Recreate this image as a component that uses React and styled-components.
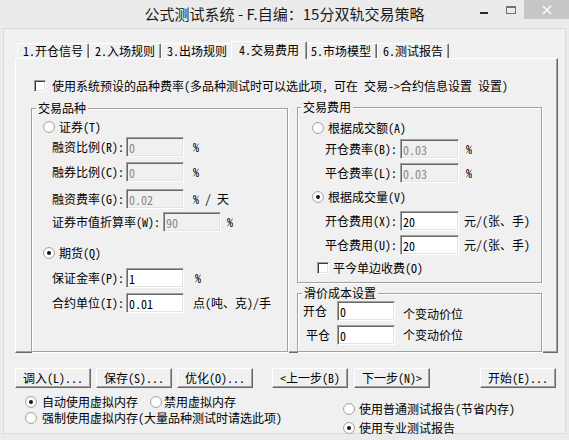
import React from "react"
import styled, { createGlobalStyle } from "styled-components"

const GlobalStyle = createGlobalStyle`
  * { box-sizing: border-box; }
  html, body { margin: 0; padding: 0; background: #ebebeb; }
  body {
    font-family: "Noto Sans Mono CJK SC", "Noto Sans CJK SC", "Liberation Sans", sans-serif;
    font-size: 12px;
    line-height: 14px;
    color: #000;
  }
`

const Window = styled.div`
  width: 569px;
  height: 440px;
  background: #ebebeb;
  display: flex;
  flex-direction: column;
  overflow: hidden;
`

const TitleBar = styled.div`
  height: 28px;
  flex-shrink: 0;
  display: grid;
`

const Title = styled.div`
  grid-area: 1 / 1;
  align-self: center;
  justify-self: center;
  font-family: "Noto Sans CJK SC", sans-serif;
  font-size: 15px;
  line-height: 20px;
  color: #1b1b1b;
`

const Controls = styled.div`
  grid-area: 1 / 1;
  justify-self: end;
  align-self: start;
  display: flex;
`

const CtrlBtn = styled.div`
  width: ${p => p.$w}px;
  height: 19px;
  display: flex;
  align-items: center;
  justify-content: center;
  background: ${p => p.$bg || "transparent"};
`

const MinGlyph = styled.div`
  width: 8px;
  height: 2px;
  background: #2b2b2b;
  margin-top: 6px;
`

const MaxGlyph = styled.div`
  width: 10px;
  height: 8px;
  border: 1px solid #707070;
  border-top-width: 2px;
  margin-top: 1px;
`

const Client = styled.div`
  margin: 0 3px;
  height: 406px;
  background: #f0f0f0;
  border: 1px solid #dadada;
  display: flex;
  flex-direction: column;
`

const TabStrip = styled.div`
  display: flex;
  align-items: flex-end;
  height: 15px;
  margin: 14px 0 0 13px;
`

const Tab = styled.div`
  position: relative;
  z-index: ${p => (p.$active ? 1 : 0)};
  height: ${p => (p.$active ? 18 : 15)}px;
  margin: ${p => (p.$active ? "0 -2px -1px" : "0")};
  padding: ${p => (p.$active ? "0 7px 2px" : "0 5px")};
  display: flex;
  align-items: center;
  white-space: nowrap;
  background: #f0f0f0;
  border-top: 1px solid #fff;
  border-left: 1px solid #fff;
  border-right: 1px solid #696969;
  box-shadow: inset -1px 0 0 #a0a0a0;
  border-radius: 2px 2px 0 0;
`

const Panel = styled.div`
  margin-left: 11px;
  width: 543px;
  height: 295px;
  flex-shrink: 0;
  border: 1px solid;
  border-color: #fff #696969 #696969 #fff;
  box-shadow: inset -1px -1px 0 #a0a0a0;
  padding: 21px 0 0 15px;
  display: flex;
  flex-direction: column;
`

const CheckRow = styled.div`
  display: flex;
  align-items: center;
  gap: ${p => p.$gap ?? 6}px;
  height: ${p => p.$h ?? 12}px;
  margin-top: ${p => p.$mt ?? 0}px;
  padding-left: ${p => p.$pl ?? 3}px;
  white-space: nowrap;
`

const CheckBox = styled.span`
  width: 12px;
  height: 12px;
  flex-shrink: 0;
  background: #fff;
  border: 1px solid;
  border-color: #a0a0a0 #fff #fff #a0a0a0;
  box-shadow: inset 1px 1px 0 #3c3c3c, inset -1px -1px 0 #e3e3e3;
`

const Columns = styled.div`
  display: flex;
  align-items: flex-start;
  margin-top: 16px;
`

const RightColumn = styled.div`
  display: flex;
  flex-direction: column;
  gap: 10px;
  margin: -1px 0 0 9px;
`

const GroupBox = styled.div`
  position: relative;
  width: ${p => p.$w}px;
  height: ${p => p.$h}px;
  border: 1px solid #a0a0a0;
  box-shadow: inset 1px 1px 0 #fff, 1px 1px 0 #fff;
  display: flex;
  flex-direction: column;
`

const Legend = styled.span`
  position: absolute;
  top: -8px;
  left: ${p => p.$left ?? 4}px;
  padding: 0 2px;
  line-height: 14px;
  background: #f0f0f0;
  white-space: nowrap;
`

const Row = styled.div`
  display: flex;
  align-items: center;
  height: 20px;
  margin-top: ${p => p.$mt ?? 0}px;
  padding-left: ${p => p.$pl ?? 0}px;
  white-space: nowrap;
`

const Label = styled.span`
  width: ${p => p.$w}px;
  flex-shrink: 0;
`

const Field = styled.input`
  width: ${p => p.$w ?? 58}px;
  height: 20px;
  flex-shrink: 0;
  margin: 0;
  padding: 0 2px;
  font: inherit;
  font-size: 12px;
  color: ${p => (p.disabled ? "#8a8a8a" : "#000")};
  background: ${p => (p.disabled ? "#f0f0f0" : "#fff")};
  border: 1px solid;
  border-color: #a0a0a0 #fff #fff #a0a0a0;
  box-shadow: inset 1px 1px 0 #696969, inset -1px -1px 0 #e3e3e3;
  outline: none;
`

const Unit = styled.span`
  margin-left: ${p => p.$ml ?? 8}px;
  margin-top: ${p => p.$mt ?? 0}px;
`

const RadioOption = styled.span`
  display: inline-flex;
  align-items: center;
  gap: ${p => p.$gap ?? 4}px;
  margin-left: ${p => p.$ml ?? 0}px;
  white-space: nowrap;
`

const RadioCircle = styled.span`
  width: 12px;
  height: 12px;
  flex-shrink: 0;
  border-radius: 50%;
  border: 1px solid #a8a8a8;
  background: radial-gradient(circle at 50% 50%, #fff 50%, #e4e4e4 100%);
  display: inline-flex;
  align-items: center;
  justify-content: center;

  &::after {
    content: "";
    display: ${p => (p.$checked ? "block" : "none")};
    width: 4px;
    height: 4px;
    border-radius: 50%;
    background: #151515;
  }
`

const ButtonRow = styled.div`
  display: flex;
  margin: 15px 0 0 11px;
`

const Button = styled.div`
  width: 76px;
  height: 20px;
  margin-left: ${p => p.$ml ?? 0}px;
  display: flex;
  align-items: center;
  justify-content: center;
  white-space: nowrap;
  background: #f0f0f0;
  border: 1px solid;
  border-color: #fff #696969 #696969 #fff;
  box-shadow: inset -1px -1px 0 #a0a0a0;
`

const OptionsArea = styled.div`
  display: flex;
`

const OptionsLeft = styled.div`
  width: 339px;
  padding: 6px 0 0 21px;
  display: flex;
  flex-direction: column;
`

const OptionsRight = styled.div`
  padding-top: 13px;
  display: flex;
  flex-direction: column;
  gap: 3px;
`

const OptLine = styled.div`
  display: flex;
  align-items: center;
  height: 16px;
`

const Radio = ({ checked, children, gap, ml }) => (
  <RadioOption $gap={gap} $ml={ml}>
    <RadioCircle $checked={checked} />
    <span>{children}</span>
  </RadioOption>
)

const tabs = ["1.开仓信号", "2.入场规则", "3.出场规则", "4.交易费用", "5.市场模型", "6.测试报告"]

const buttons = [
  { text: "调入(L)...", ml: 0 },
  { text: "保存(S)...", ml: 5 },
  { text: "优化(O)...", ml: 5 },
  { text: "<上一步(B)", ml: 19 },
  { text: "下一步(N)>", ml: 6 },
  { text: "开始(E)...", ml: 50 },
]

export default function App() {
  return (
    <>
      <GlobalStyle />
      <Window>
        <TitleBar>
          <Title>公式测试系统 - F.自编：15分双轨交易策略</Title>
          <Controls>
            <CtrlBtn $w={26}><MinGlyph /></CtrlBtn>
            <CtrlBtn $w={27}><MaxGlyph /></CtrlBtn>
            <CtrlBtn $w={45} $bg="#c7c7c7">
              <svg width="10" height="10" viewBox="0 0 10 10">
                <path d="M1 1 L9 9 M9 1 L1 9" stroke="#fff" strokeWidth="1.4" fill="none" />
              </svg>
            </CtrlBtn>
          </Controls>
        </TitleBar>

        <Client>
          <TabStrip>
            {tabs.map(t => (
              <Tab key={t} $active={t.startsWith("4")}>{t}</Tab>
            ))}
          </TabStrip>

          <Panel>
            <CheckRow>
              <CheckBox />
              <span>使用系统预设的品种费率(多品种测试时可以选此项, 可在 交易-&gt;合约信息设置 设置)</span>
            </CheckRow>

            <Columns>
              <GroupBox $w={257} $h={244}>
                <Legend>交易品种</Legend>
                <Row $mt={8} $pl={11}><Radio>证券(T)</Radio></Row>
                <Row $pl={20}>
                  <Label $w={74}>融资比例(R):</Label>
                  <Field disabled defaultValue="0" />
                  <Unit $ml={9}>%</Unit>
                </Row>
                <Row $mt={5} $pl={20}>
                  <Label $w={74}>融券比例(C):</Label>
                  <Field disabled defaultValue="0" />
                  <Unit $ml={9}>%</Unit>
                </Row>
                <Row $mt={7} $pl={20}>
                  <Label $w={74}>融资费率(G):</Label>
                  <Field disabled defaultValue="0.02" />
                  <Unit $ml={9}>% / 天</Unit>
                </Row>
                <Row $mt={3} $pl={20}>
                  <Label $w={111}>证券市值折算率(W):</Label>
                  <Field disabled defaultValue="90" />
                  <Unit $ml={6}>%</Unit>
                </Row>
                <Row $mt={11} $pl={11}><Radio checked>期货(Q)</Radio></Row>
                <Row $mt={5} $pl={20}>
                  <Label $w={74}>保证金率(P):</Label>
                  <Field defaultValue="1" />
                  <Unit $ml={11}>%</Unit>
                </Row>
                <Row $mt={5} $pl={20}>
                  <Label $w={74}>合约单位(I):</Label>
                  <Field defaultValue="0.01" />
                  <Unit $ml={9}>点(吨、克)/手</Unit>
                </Row>
              </GroupBox>

              <RightColumn>
                <GroupBox $w={245} $h={176}>
                  <Legend $left={3}>交易费用</Legend>
                  <Row $mt={10} $pl={14}><Radio>根据成交额(A)</Radio></Row>
                  <Row $mt={1} $pl={27}>
                    <Label $w={75}>开仓费率(B):</Label>
                    <Field $w={59} disabled defaultValue="0.03" />
                    <Unit $ml={7}>%</Unit>
                  </Row>
                  <Row $mt={4} $pl={27}>
                    <Label $w={75}>平仓费率(L):</Label>
                    <Field $w={59} disabled defaultValue="0.03" />
                    <Unit $ml={7}>%</Unit>
                  </Row>
                  <Row $mt={4} $pl={14}><Radio checked>根据成交量(V)</Radio></Row>
                  <Row $mt={4} $pl={27}>
                    <Label $w={75}>开仓费用(X):</Label>
                    <Field $w={59} defaultValue="20" />
                    <Unit $ml={5}>元/(张、手)</Unit>
                  </Row>
                  <Row $mt={4} $pl={27}>
                    <Label $w={75}>平仓费用(U):</Label>
                    <Field $w={59} defaultValue="20" />
                    <Unit $ml={5}>元/(张、手)</Unit>
                  </Row>
                  <CheckRow $h={20} $mt={3} $pl={19} $gap={4}>
                    <CheckBox />
                    <span>平今单边收费(O)</span>
                  </CheckRow>
                </GroupBox>

                <GroupBox $w={245} $h={59}>
                  <Legend>滑价成本设置</Legend>
                  <Row $mt={7} $pl={5}>
                    <Label $w={34}>开仓</Label>
                    <Field defaultValue="0" />
                    <Unit $ml={8} $mt={6}>个变动价位</Unit>
                  </Row>
                  <Row $mt={4} $pl={8}>
                    <Label $w={31}>平仓</Label>
                    <Field defaultValue="0" />
                    <Unit $ml={8}>个变动价位</Unit>
                  </Row>
                </GroupBox>
              </RightColumn>
            </Columns>
          </Panel>

          <ButtonRow>
            {buttons.map(b => (
              <Button key={b.text} $ml={b.ml}>{b.text}</Button>
            ))}
          </ButtonRow>

          <OptionsArea>
            <OptionsLeft>
              <OptLine>
                <Radio checked gap={5}>自动使用虚拟内存</Radio>
                <Radio gap={2} ml={12}>禁用虚拟内存</Radio>
              </OptLine>
              <OptLine>
                <Radio gap={5}>强制使用虚拟内存(大量品种测试时请选此项)</Radio>
              </OptLine>
            </OptionsLeft>
            <OptionsRight>
              <OptLine><Radio>使用普通测试报告(节省内存)</Radio></OptLine>
              <OptLine><Radio checked>使用专业测试报告</Radio></OptLine>
            </OptionsRight>
          </OptionsArea>
        </Client>
      </Window>
    </>
  )
}
